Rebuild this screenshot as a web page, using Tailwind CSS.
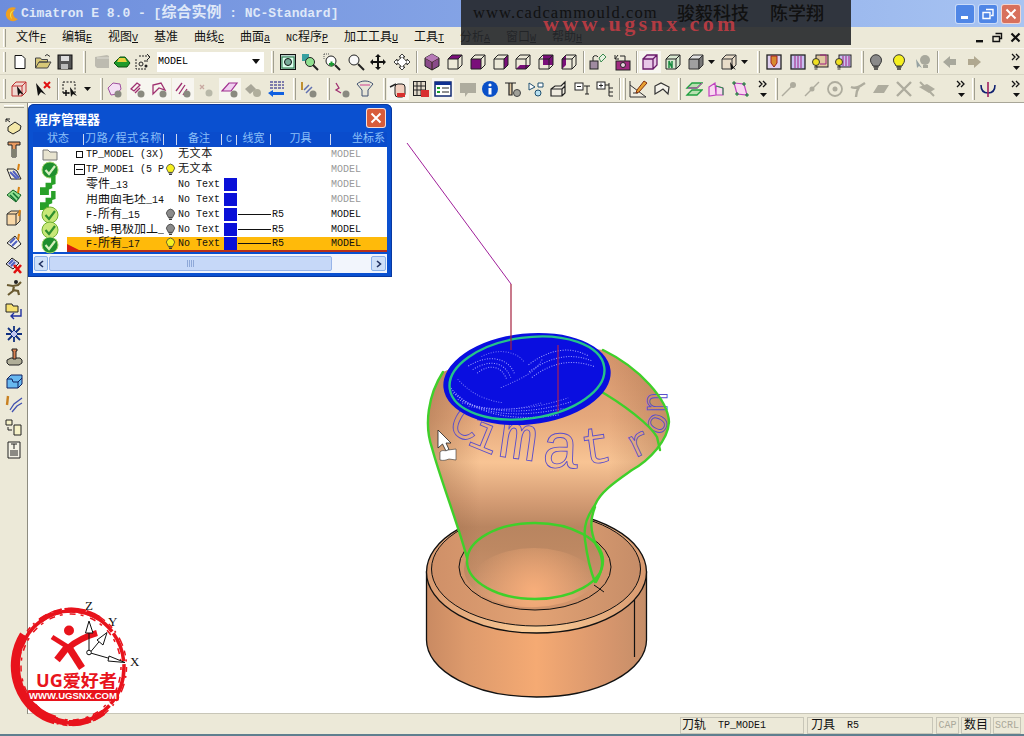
<!DOCTYPE html>
<html><head><meta charset="utf-8">
<script src="https://cdn.jsdelivr.net/npm/@tailwindcss/browser@4"></script>
</head>
<body class="m-0">
<svg width="0" height="0" class="absolute">
<defs>
<symbol id="grey" viewBox="0 0 18 18"><path d="M5 11a5.500 5.500 0 1 1 8 0l-1 2H6z" fill="#8a8a8a" stroke="#333"/><path d="M6.500 14h5M7 16h4" stroke="#333" stroke-width="1.400"/></symbol>
<symbol id="yel" viewBox="0 0 18 18"><path d="M5 11a5.500 5.500 0 1 1 8 0l-1 2H6z" fill="#f6f020" stroke="#333"/><path d="M6.500 14h5M7 16h4" stroke="#333" stroke-width="1.400"/></symbol>
<symbol id="chev" viewBox="0 0 14 22"><path d="M3 3l3 3-3 3M7 3l3 3-3 3" fill="none" stroke="#111" stroke-width="1.300"/><path d="M4 15h7l-3.500 4z" fill="#111"/></symbol>
<symbol id="face" viewBox="0 0 18 18"><path d="M2 6h10v10H2zM2 6l4-4h10v10l-4 4M12 6l4-4" fill="none" stroke="#222"/></symbol>
<symbol id="sel" viewBox="0 0 18 18"><path d="M2 8l5-5 7 1 1 5-4 5-6 1z" fill="#f4dff4" stroke="#a050a0"/><circle cx="12" cy="14" r="3.500" fill="#8a8a80"/></symbol>
<symbol id="ok" viewBox="0 0 18 18"><circle cx="9" cy="9" r="8" fill="#1f8f2f" stroke="#a8d870"/><path d="M4.500 9l3.500 4 6-8" fill="none" stroke="#d8f0c0" stroke-width="2.200"/></symbol>
<symbol id="okl" viewBox="0 0 18 18"><circle cx="9" cy="9" r="8" fill="#c8e878" stroke="#70b030"/><path d="M4.500 9l3.500 4 6-8" fill="none" stroke="#2f8f2f" stroke-width="2.200"/></symbol>
<symbol id="step" viewBox="0 0 18 18"><path d="M0 11h5V7h5V1h4v7l-3 1v3l-3 1v5H0z" fill="#28a028"/></symbol>
</defs>
</svg>
<div class="relative w-[1024px] h-[736px] overflow-hidden flex flex-col bg-[#ece9d8] text-black font-['Liberation_Mono','Noto_Sans_CJK_SC',monospace]">

<!-- title bar -->
<div class="h-[27px] shrink-0 flex items-center bg-gradient-to-r from-[#6d8ddc] via-[#86a5e6] to-[#a8c4f2]">
  <svg width="18" height="18" viewBox="0 0 18 18" class="ml-[3px]"><path d="M13 3a7 7 0 1 0 2 11 6 6 0 0 1-2-11z" fill="#f0a020"/><path d="M12 5a5 5 0 0 0-5 6 5 5 0 0 0 2 3 6 6 0 0 1 3-9z" fill="#f4e040"/></svg>
  <span class="ml-[0px] text-[13px] font-bold text-[#dfe8f8] whitespace-pre leading-none">Cimatron E 8.0 - [<span class="text-[15px]">综合实例</span> : NC-Standard]</span>
  <div class="ml-auto flex gap-[3px] mr-[3px]">
    <div class="w-[20px] h-[20px] rounded-[3px] bg-[#4f86e6] border border-white/70 flex items-end pl-[5px] pb-[4px]"><div class="w-[7px] h-[3px] bg-white"></div></div>
    <div class="w-[20px] h-[20px] rounded-[3px] bg-[#4f86e6] border border-white/70 flex items-center justify-center"><svg width="12" height="12" viewBox="0 0 12 12"><path d="M4 1.500h7v6H9M1 4.500h7v6H1z" fill="none" stroke="#fff" stroke-width="1.400"/></svg></div>
    <div class="w-[20px] h-[20px] rounded-[3px] bg-[#d8705c] border border-white/70 flex items-center justify-center"><svg width="12" height="12" viewBox="0 0 12 12"><path d="M1.500 1.500l9 9M10.500 1.500l-9 9" stroke="#fff" stroke-width="2"/></svg></div>
  </div>
</div>

<!-- menu -->
<div class="h-[22px] shrink-0 flex items-center text-[10px] text-[#111] border-b border-[#f8f6ee]">
  <div class="ml-[3px] w-[3px] h-[18px] border-l border-white border-r border-r-[#a09e90]"></div>
  <div class="ml-[10px] flex gap-[16px] items-center">
    <span class="w-[30px] whitespace-nowrap"><span class="text-[12px]">文件</span><u>F</u></span>
    <span class="w-[30px] whitespace-nowrap"><span class="text-[12px]">编辑</span><u>E</u></span>
    <span class="w-[30px] whitespace-nowrap"><span class="text-[12px]">视图</span><u>V</u></span>
    <span class="w-[24px] whitespace-nowrap"><span class="text-[12px]">基准</span></span>
    <span class="w-[30px] whitespace-nowrap"><span class="text-[12px]">曲线</span><u>C</u></span>
    <span class="w-[30px] whitespace-nowrap"><span class="text-[12px]">曲面</span><u>a</u></span>
    <span class="w-[42px] whitespace-nowrap">NC<span class="text-[12px]">程序</span><u>P</u></span>
    <span class="w-[54px] whitespace-nowrap"><span class="text-[12px]">加工工具</span><u>U</u></span>
    <span class="w-[30px] whitespace-nowrap"><span class="text-[12px]">工具</span><u>T</u></span>
    <span class="w-[30px] whitespace-nowrap"><span class="text-[12px]">分析</span><u>A</u></span>
    <span class="w-[30px] whitespace-nowrap"><span class="text-[12px]">窗口</span><u>W</u></span>
    <span class="w-[30px] whitespace-nowrap"><span class="text-[12px]">帮助</span><u>H</u></span>
  </div>
  <div class="ml-auto flex items-center gap-[7px] mr-[3px]">
    <svg width="10" height="10" viewBox="0 0 10 10"><rect x="1" y="7" width="7" height="2.400" fill="#111"/></svg>
    <svg width="11" height="11" viewBox="0 0 11 11"><path d="M3.500 1.500h6v5H8M1 4.500h6.500v5H1z" fill="none" stroke="#111" stroke-width="1.400"/></svg>
    <svg width="11" height="11" viewBox="0 0 11 11"><path d="M1.500 1.500l8 8M9.500 1.500l-8 8" stroke="#111" stroke-width="2.200"/></svg>
  </div>
</div>

<!-- toolbar 1 -->
<div class="h-[26px] shrink-0 flex items-center border-b border-[#d8d5c4]">
  <div class="ml-[3px] w-[3px] h-[20px] border-l border-white border-r border-r-[#a09e90]"></div>
  <div class="ml-[3px] w-[22px] h-[22px] flex items-center justify-center"><svg width="16" height="16" viewBox="0 0 16 16"><path d="M3 1.500h7l3 3v10H3z" fill="#fff" stroke="#111"/></svg></div>
  <div class="ml-[1px] w-[22px] h-[22px] flex items-center justify-center"><svg width="18" height="18" viewBox="0 0 18 18"><path d="M1.500 15V5h5l1 1.500h6V9H5L1.500 15h12l3.500-6H5" fill="#d8c878" stroke="#444"/><path d="M11 3l2-1.500 3 2" fill="none" stroke="#333"/></svg></div>
  <div class="w-[22px] h-[22px] flex items-center justify-center"><svg width="16" height="16" viewBox="0 0 16 16"><rect x="1" y="1" width="14" height="14" fill="#555" stroke="#111"/><rect x="4" y="2" width="8" height="5" fill="#ddd"/><rect x="4" y="10" width="7" height="5" fill="#bbb"/></svg></div>
  <div class="ml-[7px] w-[3px] h-[22px] border-l border-white border-r border-r-[#a09e90]"></div>
  <div class="ml-[6px] w-[20px] h-[22px] flex items-center justify-center"><svg width="18" height="18" viewBox="0 0 18 18"><path d="M2 4l12-2 2 1v12H4l-2-2z" fill="#bdbbb0"/><path d="M4 5h12" stroke="#e0dfd6"/></svg></div>
  <div class="w-[20px] h-[22px] flex items-center justify-center"><svg width="18" height="14" viewBox="0 0 18 14"><path d="M1 8l6-6h5l5 6-3 4H5z" fill="#1f9a2a" stroke="#0a5010"/><path d="M6 3h6l2 4H4z" fill="#e8d040"/></svg></div>
  <div class="ml-[1px] w-[20px] h-[22px] flex items-center justify-center"><svg width="18" height="18" viewBox="0 0 18 18"><path d="M2 6v10h10M5 3h10" fill="none" stroke="#222" stroke-dasharray="2 1"/><circle cx="7" cy="11" r="2" fill="none" stroke="#222"/><circle cx="12" cy="13" r="1.500" fill="#222"/><path d="M13 1l3 3-3 3M10 8l4 0" fill="none" stroke="#222"/></svg></div>
  <div class="ml-[4px] w-[107px] h-[20px] bg-white flex items-center text-[10px] pl-[1px] justify-between pr-[4px]"><span>MODEL</span><svg width="8" height="5" viewBox="0 0 8 5"><path d="M0 0h8L4 5z" fill="#111"/></svg></div>
  <div class="ml-[7px] w-[3px] h-[22px] border-l border-white border-r border-r-[#a09e90]"></div>
  <div class="ml-[3px] w-[22px] h-[22px] flex items-center justify-center"><svg width="18" height="18" viewBox="0 0 18 18"><rect x="1.500" y="1.500" width="15" height="15" fill="#bcd0cc" stroke="#111"/><rect x="3" y="4" width="12" height="11" fill="#dfe" stroke="#274"/><circle cx="9" cy="9" r="3.500" fill="#7a9" stroke="#111"/></svg></div>
  <div class="w-[22px] h-[22px] flex items-center justify-center"><svg width="18" height="18" viewBox="0 0 18 18"><rect x="1" y="1" width="7" height="7" fill="#38a0a0"/><circle cx="9" cy="9" r="4.500" fill="#90e090" stroke="#222"/><path d="M12 12l5 5" stroke="#222" stroke-width="2"/></svg></div>
  <div class="w-[22px] h-[22px] flex items-center justify-center"><svg width="18" height="18" viewBox="0 0 18 18"><circle cx="8" cy="8" r="5" fill="#fff" stroke="#222"/><path d="M12 12l5 5" stroke="#222" stroke-width="2"/><path d="M1 1h5M1 1v5" stroke="#555" stroke-dasharray="1 1"/><path d="M6 11h5M8.500 8.500v5" stroke="#1a9a30" stroke-width="2"/></svg></div>
  <div class="ml-[2px] w-[22px] h-[22px] flex items-center justify-center"><svg width="18" height="18" viewBox="0 0 18 18"><circle cx="7" cy="7" r="5" fill="#f8f8f8" stroke="#222"/><path d="M11 11l6 6" stroke="#222" stroke-width="2"/></svg></div>
  <div class="w-[22px] h-[22px] flex items-center justify-center"><svg width="18" height="18" viewBox="0 0 18 18"><path d="M9 1l3 3h-2v4h4V6l3 3-3 3v-2h-4v4h2l-3 3-3-3h2v-4H4v2L1 9l3-3v2h4V4H6z" fill="#111"/></svg></div>
  <div class="ml-[2px] w-[22px] h-[22px] flex items-center justify-center"><svg width="18" height="18" viewBox="0 0 18 18"><path d="M9 1l3 3h-2v1a6 6 0 0 1 3 3h1V6l3 3-3 3v-2h-1a6 6 0 0 1-3 3v1h2l-3 3-3-3h2v-1a6 6 0 0 1-3-3H4v2L1 9l3-3v2h1a6 6 0 0 1 3-3V4H6z" fill="#fff" stroke="#111" stroke-width=".8"/></svg></div>
  <div class="ml-[3px] w-[2px] h-[22px] border-l border-[#a09e90] border-r border-r-white"></div>
  <div class="ml-[3px] w-[22px] h-[22px] flex items-center justify-center"><svg width="18" height="18" viewBox="0 0 18 18"><path d="M9 1l7 4v8l-7 4-7-4V5z" fill="#8a4a8a" stroke="#222"/><path d="M2 5l7 4 7-4M9 9v8" stroke="#321"/><path d="M9 1l7 4-7 4-7-4z" fill="#b67ab6"/></svg></div>
  <div class="ml-[1px] w-[22px] h-[22px] flex items-center justify-center"><svg width="18" height="18"><polygon points="6,2 16,2 12,6 2,6" fill="#7a0f7a"/><use href="#face" width="18" height="18"/></svg></div>
  <div class="ml-[1px] w-[22px] h-[22px] flex items-center justify-center"><svg width="18" height="18"><rect x="2" y="6" width="10" height="10" fill="#7a0f7a"/><use href="#face" width="18" height="18"/></svg></div>
  <div class="ml-[1px] w-[22px] h-[22px] flex items-center justify-center"><svg width="18" height="18"><polygon points="12,6 16,2 16,12 12,16" fill="#7a0f7a"/><use href="#face" width="18" height="18"/></svg></div>
  <div class="w-[22px] h-[22px] flex items-center justify-center"><svg width="18" height="18"><polygon points="2,16 6,12 16,12 12,16" fill="#7a0f7a"/><use href="#face" width="18" height="18"/></svg></div>
  <div class="ml-[1px] w-[22px] h-[22px] flex items-center justify-center"><svg width="18" height="18"><rect x="6" y="2" width="10" height="10" fill="#7a0f7a"/><use href="#face" width="18" height="18"/></svg></div>
  <div class="ml-[1px] w-[22px] h-[22px] flex items-center justify-center"><svg width="18" height="18"><polygon points="2,6 6,2 6,12 2,16" fill="#7a0f7a"/><use href="#face" width="18" height="18"/></svg></div>
  <div class="ml-[3px] w-[2px] h-[22px] border-l border-[#a09e90] border-r border-r-white"></div>
  <div class="ml-[2px] w-[22px] h-[22px] flex items-center justify-center"><svg width="18" height="18" viewBox="0 0 18 18"><rect x="1" y="8" width="8" height="8" fill="#a08aa0" stroke="#222"/><path d="M4 8V4a3 3 0 0 1 5 0" fill="none" stroke="#222"/><path d="M10 5l4-4 3 3-5 5z" fill="#e8f0e0" stroke="#3a8a50"/></svg></div>
  <div class="ml-[2px] w-[22px] h-[22px] flex items-center justify-center"><svg width="18" height="18" viewBox="0 0 18 18"><rect x="3" y="8" width="14" height="9" fill="#a02a80" stroke="#222"/><circle cx="10" cy="12" r="2.500" fill="#e8d0e0" stroke="#222"/><path d="M2 6l3-4M2 2v4h4M7 3h5v5" fill="none" stroke="#222"/></svg></div>
  <div class="ml-[3px] w-[2px] h-[22px] border-l border-[#a09e90] border-r border-r-white"></div>
  <div class="ml-[1px] w-[22px] h-[22px] flex items-center justify-center bg-[#f7f6f0]"><svg width="18" height="18" viewBox="0 0 18 18"><path d="M2 6h10v10H2zM2 6l4-4h10v10l-4 4M12 6l4-4" fill="#e8c8e8" stroke="#6a1a6a" stroke-width="1.300"/></svg></div>
  <div class="ml-[1px] w-[22px] h-[22px] flex items-center justify-center"><svg width="18" height="18" viewBox="0 0 18 18"><path d="M2 6h10v10H2zM2 6l4-4h10v10l-4 4M12 6l4-4" fill="#d8e8d0" stroke="#222"/><path d="M5 15V8l3 7V8" fill="none" stroke="#1a8a40" stroke-width="1.500"/></svg></div>
  <div class="ml-[1px] w-[22px] h-[22px] flex items-center justify-center"><svg width="18" height="18" viewBox="0 0 18 18"><path d="M2 6h10v10H2z" fill="#a0a0a0" stroke="#333"/><path d="M2 6l4-4h10l-4 4z" fill="#e0e0e0" stroke="#333"/><path d="M12 6l4-4v10l-4 4z" fill="#787878" stroke="#333"/></svg></div>
  <div class="w-[8px] flex justify-center"><svg width="7" height="4" viewBox="0 0 7 4"><path d="M0 0h7L3.500 4z" fill="#111"/></svg></div>
  <div class="ml-[3px] w-[22px] h-[22px] flex items-center justify-center"><svg width="18" height="18" viewBox="0 0 18 18"><path d="M2 6h10v10H2zM2 6l4-4h10v10l-4 4M12 6l4-4" fill="#e8dcc8" stroke="#333"/><path d="M10 9l1 8 2-2 3 2z" fill="#111"/></svg></div>
  <div class="w-[8px] flex justify-center"><svg width="7" height="4" viewBox="0 0 7 4"><path d="M0 0h7L3.500 4z" fill="#111"/></svg></div>
  <div class="ml-[9px] w-[3px] h-[22px] border-l border-white border-r border-r-[#a09e90]"></div>
  <div class="ml-[3px] w-[22px] h-[22px] flex items-center justify-center"><svg width="18" height="18" viewBox="0 0 18 18"><rect x="2" y="2" width="14" height="14" fill="#e0d0f0" stroke="#222" stroke-width="1.300"/><path d="M6 3h6v7l-3 4-3-4z" fill="#d88a30" stroke="#a02020"/></svg></div>
  <div class="ml-[2px] w-[22px] h-[22px] flex items-center justify-center"><svg width="18" height="18" viewBox="0 0 18 18"><rect x="2" y="2" width="14" height="14" fill="#c8c0f0" stroke="#222" stroke-width="1.300"/><path d="M6 3v12M9 3v12M12 3v12" stroke="#a02080"/></svg></div>
  <div class="w-[22px] h-[22px] flex items-center justify-center"><svg width="18" height="18" viewBox="0 0 18 18"><rect x="5" y="2" width="12" height="12" fill="#e0c8a0" stroke="#222"/><path d="M9 2h6v9H9" fill="none" stroke="#a02080"/><circle cx="5" cy="9" r="3.500" fill="#f0e020" stroke="#333"/><path d="M3 14h4M3.500 16h3" stroke="#333"/></svg></div>
  <div class="ml-[1px] w-[22px] h-[22px] flex items-center justify-center"><svg width="18" height="18" viewBox="0 0 18 18"><rect x="5" y="2" width="12" height="12" fill="#c8c0f0" stroke="#222"/><path d="M9 3v10M12 3v10M15 3v10" stroke="#a02080"/><circle cx="5" cy="9" r="3.500" fill="#f0e020" stroke="#333"/><path d="M3 14h4M3.500 16h3" stroke="#333"/></svg></div>
  <div class="ml-[7px] w-[3px] h-[22px] border-l border-white border-r border-r-[#a09e90]"></div>
  <div class="ml-[1px] w-[22px] h-[22px] flex items-center justify-center"><svg width="18" height="18"><use href="#grey" width="18" height="18"/></svg></div>
  <div class="ml-[1px] w-[22px] h-[22px] flex items-center justify-center"><svg width="18" height="18"><use href="#yel" width="18" height="18"/></svg></div>
  <div class="ml-[2px] w-[22px] h-[22px] flex items-center justify-center"><svg width="18" height="18" viewBox="0 0 18 18"><circle cx="11" cy="7" r="5" fill="#a8a89c"/><path d="M9 12h5v3H9z" fill="#a8a89c"/><path d="M2 6l1 9 2-2 3 2z" fill="#96a2a2"/></svg></div>
  <div class="ml-[3px] w-[2px] h-[22px] border-l border-[#a09e90] border-r border-r-white"></div>
  <div class="w-[22px] h-[22px] flex items-center justify-center"><svg width="16" height="14" viewBox="0 0 16 14"><path d="M1 7l7-6v3h6v6H8v3z" fill="#a8a89c"/></svg></div>
  <div class="ml-[2px] w-[22px] h-[22px] flex items-center justify-center"><svg width="16" height="14" viewBox="0 0 16 14"><path d="M15 7L8 1v3H2v6h6v3z" fill="#b0a890"/></svg></div>
  <svg width="14" height="22" class="ml-auto mr-[1px]"><use href="#chev" width="14" height="22"/></svg>
</div>

<!-- toolbar 2 -->
<div class="h-[28px] shrink-0 flex items-center border-b border-[#a8a698]">
  <div class="ml-[3px] w-[3px] h-[20px] border-l border-white border-r border-r-[#a09e90]"></div>
  <div class="ml-[2px] w-[22px] h-[22px] flex items-center justify-center"><svg width="18" height="18" viewBox="0 0 18 18"><path d="M2 6h10v10H2zM2 6l4-4h10v10l-4 4M12 6l4-4" fill="#f0d8d0" stroke="#c03030"/><path d="M7 6l1 10 2-3 4 2z" fill="#111"/></svg></div>
  <div class="ml-[2px] w-[22px] h-[22px] flex items-center justify-center"><svg width="18" height="18" viewBox="0 0 18 18"><path d="M2 3l2 13 3-4 5 3z" fill="#111"/><path d="M10 2l6 6M16 2l-6 6" stroke="#e01010" stroke-width="2"/></svg></div>
  <div class="ml-[3px] w-[2px] h-[22px] border-l border-[#a09e90] border-r border-r-white"></div>
  <div class="w-[22px] h-[22px] flex items-center justify-center"><svg width="18" height="18" viewBox="0 0 18 18"><rect x="2" y="2" width="12" height="11" fill="none" stroke="#111" stroke-dasharray="2 1.500"/><path d="M9 7l1 10 2-3 4 2z" fill="#111"/><path d="M5 10v6M2 13h6" stroke="#111" stroke-width="1.500"/></svg></div>
  <div class="ml-[2px] w-[8px] flex justify-center"><svg width="7" height="4" viewBox="0 0 7 4"><path d="M0 0h7L3.500 4z" fill="#111"/></svg></div>
  <div class="ml-[9px] w-[3px] h-[22px] border-l border-white border-r border-r-[#a09e90]"></div>
  <div class="ml-[1px] w-[22px] h-[22px] flex items-center justify-center"><svg width="18" height="18"><use href="#sel" width="18" height="18"/></svg></div>
  <div class="ml-[1px] w-[22px] h-[22px] flex items-center justify-center bg-[#f7f6f0]"><svg width="18" height="18" viewBox="0 0 18 18"><path d="M2 9l6-6 3 2-6 6zM6 13l5-5" fill="none" stroke="#a03070" stroke-width="1.300"/><circle cx="12" cy="14" r="3.500" fill="#8a8a80"/></svg></div>
  <div class="w-[22px] h-[22px] flex items-center justify-center bg-[#f7f6f0]"><svg width="18" height="18" viewBox="0 0 18 18"><path d="M2 14V5l8-2 4 7-6-2z" fill="none" stroke="#a03070" stroke-width="1.300"/><circle cx="12" cy="14" r="3.500" fill="#8a8a80"/></svg></div>
  <div class="ml-[1px] w-[22px] h-[22px] flex items-center justify-center bg-[#f7f6f0]"><svg width="18" height="18" viewBox="0 0 18 18"><path d="M2 11l6-8M5 14l6-9M9 15l4-6" fill="none" stroke="#a03070" stroke-width="1.300"/><circle cx="13" cy="14" r="3.500" fill="#8a8a80"/></svg></div>
  <div class="ml-[1px] w-[22px] h-[22px] flex items-center justify-center"><svg width="18" height="18" viewBox="0 0 18 18"><path d="M3 5l4 4M7 5l-4 4" stroke="#c8a8a0" stroke-width="1.300"/><circle cx="12" cy="13" r="3.500" fill="#b8b8a8"/></svg></div>
  <div class="ml-[2px] w-[22px] h-[22px] flex items-center justify-center bg-[#f7f6f0]"><svg width="18" height="18" viewBox="0 0 18 18"><path d="M1 11l7-8h8l-6 8z" fill="#f0d0f0" stroke="#a03090" stroke-width="1.200"/><circle cx="13" cy="14" r="3.500" fill="#8a8a80"/></svg></div>
  <div class="ml-[1px] w-[22px] h-[22px] flex items-center justify-center"><svg width="18" height="18" viewBox="0 0 18 18"><path d="M1 9l6-5 5 5-6 5z" fill="#a8a698"/><circle cx="13" cy="13" r="4" fill="#b0ae9c"/></svg></div>
  <div class="ml-[1px] w-[22px] h-[22px] flex items-center justify-center"><svg width="18" height="18" viewBox="0 0 18 18"><path d="M3 2h14M3 5h14M3 8h14" stroke="#101080" stroke-width="1.200" stroke-dasharray="3 1"/><path d="M1 13l5-3v2h11v3H6v2z" fill="#1060e0"/></svg></div>
  <div class="ml-[6px] w-[3px] h-[22px] border-l border-white border-r border-r-[#a09e90]"></div>
  <div class="ml-[2px] w-[22px] h-[22px] flex items-center justify-center"><svg width="18" height="18" viewBox="0 0 18 18"><path d="M2 2v8" stroke="#c09030" stroke-width="2"/><path d="M4 10l5-5M6 13l6-6" stroke="#6070b0" stroke-width="1.500"/><circle cx="13" cy="14" r="3.500" fill="#8a8a80"/></svg></div>
  <div class="ml-[7px] w-[3px] h-[22px] border-l border-white border-r border-r-[#a09e90]"></div>
  <div class="ml-[1px] w-[22px] h-[22px] flex items-center justify-center"><svg width="18" height="18" viewBox="0 0 18 18"><path d="M3 3l3 5-3 2 5 3" fill="none" stroke="#a03070" stroke-width="1.300"/><circle cx="13" cy="14" r="3.500" fill="#8a8a80"/></svg></div>
  <div class="ml-[1px] w-[22px] h-[22px] flex items-center justify-center"><svg width="18" height="18" viewBox="0 0 18 18"><path d="M1 4c4-4 12-4 16 0l-5 6v6H6v-6z" fill="#e8e6d8" stroke="#405070"/><path d="M4 5h10" stroke="#d04090"/></svg></div>
  <div class="ml-[7px] w-[3px] h-[22px] border-l border-white border-r border-r-[#a09e90]"></div>
  <div class="ml-[1px] w-[22px] h-[22px] flex items-center justify-center bg-[#f7f6f0]"><svg width="18" height="18" viewBox="0 0 18 18"><path d="M1 7l6-3" stroke="#222" stroke-width="1.500"/><rect x="6" y="4" width="10" height="13" rx="3" fill="#f0d0c0" stroke="#222"/><path d="M8 13h8v4H8z" fill="#d83030"/></svg></div>
  <div class="ml-[1px] w-[22px] h-[22px] flex items-center justify-center"><svg width="18" height="18" viewBox="0 0 18 18"><rect x="1.500" y="1.500" width="12" height="14" fill="#e0d8c8" stroke="#222"/><path d="M5 1v14M9 1v14M1 6h12M1 10h12" stroke="#222"/><path d="M9 10h8v7H9z" fill="#d83030"/></svg></div>
  <div class="w-[22px] h-[22px] flex items-center justify-center bg-[#f7f6f0]"><svg width="18" height="18" viewBox="0 0 18 18"><rect x="1" y="2" width="16" height="14" fill="#fff" stroke="#102870" stroke-width="1.500"/><rect x="1" y="2" width="16" height="3" fill="#103090"/><rect x="3" y="7" width="3" height="2" fill="#18a028"/><rect x="3" y="11" width="3" height="2" fill="#18a028"/><path d="M8 8h7M8 12h7" stroke="#222"/></svg></div>
  <div class="ml-[3px] w-[22px] h-[22px] flex items-center justify-center"><svg width="18" height="18" viewBox="0 0 18 18"><path d="M1 3h16v10H9l-3 4v-4H1z" fill="#aeac9e"/></svg></div>
  <div class="w-[22px] h-[22px] flex items-center justify-center"><svg width="18" height="18" viewBox="0 0 18 18"><circle cx="9" cy="9" r="8" fill="#0a50c8"/><circle cx="9" cy="5" r="1.600" fill="#fff"/><rect x="7.500" y="8" width="3" height="6.500" fill="#fff"/></svg></div>
  <div class="ml-[1px] w-[22px] h-[22px] flex items-center justify-center"><svg width="18" height="18" viewBox="0 0 18 18"><path d="M1 3h11M5 3v12h3V3" fill="#e0c8a0" stroke="#222" stroke-width="1.200"/><circle cx="13" cy="13" r="3.500" fill="#a0a098" stroke="#444"/></svg></div>
  <div class="ml-[1px] w-[22px] h-[22px] flex items-center justify-center"><svg width="18" height="18" viewBox="0 0 18 18"><path d="M2 3l6 4-6 3z" fill="#fff" stroke="#205070"/><circle cx="11" cy="13" r="3" fill="#b8e0f0" stroke="#205070"/><path d="M11 3h5v4h-5z" fill="#fff" stroke="#205070"/></svg></div>
  <div class="w-[22px] h-[22px] flex items-center justify-center"><svg width="18" height="18" viewBox="0 0 18 18"><path d="M2 16V9l4-3h6l4-4v11l-3 3zM2 9h11v7M13 9l3-3" fill="#f0ece0" stroke="#222" stroke-width="1.200"/></svg></div>
  <div class="ml-[2px] w-[22px] h-[22px] flex items-center justify-center"><svg width="18" height="18" viewBox="0 0 18 18"><rect x="2" y="3" width="8" height="7" fill="#fff" stroke="#222"/><path d="M4 6.500h4M11 6h6M14 6v8M12 14h4" fill="none" stroke="#222"/></svg></div>
  <div class="ml-[1px] w-[22px] h-[22px] flex items-center justify-center"><svg width="18" height="18" viewBox="0 0 18 18"><rect x="1" y="2" width="8" height="7" fill="#fff" stroke="#222"/><path d="M3 5.500h4M5 3.500v4M9 5h4M13 3v13M13 8h4M13 12h4M13 16h4" fill="none" stroke="#222"/></svg></div>
  <div class="ml-[3px] w-[2px] h-[22px] border-l border-[#a09e90] border-r border-r-white"></div>
  <div class="ml-[2px] w-[3px] h-[22px] border-l border-white border-r border-r-[#a09e90]"></div>
  <div class="ml-[1px] w-[22px] h-[22px] flex items-center justify-center"><svg width="20" height="20" viewBox="0 0 20 20"><path d="M2 2v16h16L2 6M5 14h5" fill="#f0ece0" stroke="#333"/><path d="M16 2l3 2-8 9-3 1 1-3z" fill="#e8a030" stroke="#803010"/></svg></div>
  <div class="ml-[2px] w-[22px] h-[22px] flex items-center justify-center"><svg width="18" height="18" viewBox="0 0 18 18"><path d="M2 14V6l6-3 8 4-1 7-5-5-3 2z" fill="#f4f2ea" stroke="#333" stroke-width="1.200"/></svg></div>
  <div class="ml-[5px] w-[3px] h-[22px] border-l border-white border-r border-r-[#a09e90]"></div>
  <div class="ml-[2px] w-[22px] h-[22px] flex items-center justify-center"><svg width="18" height="18" viewBox="0 0 18 18"><path d="M2 8l5-5h10l-5 5zM2 15l5-5h10l-5 5z" fill="#b8e0b0" stroke="#20a040" stroke-width="1.300"/><path d="M3 8h9l5-5" stroke="#d030c0" fill="none"/></svg></div>
  <div class="w-[22px] h-[22px] flex items-center justify-center"><svg width="18" height="18" viewBox="0 0 18 18"><path d="M2 7l6-4 1 12-7 1zM9 6l7 2v7l-7 0z" fill="#f8d8f0" stroke="#c040c0" stroke-width="1.200"/><path d="M9 6l7 2v7" fill="none" stroke="#20a040"/></svg></div>
  <div class="ml-[2px] w-[22px] h-[22px] flex items-center justify-center"><svg width="18" height="18" viewBox="0 0 18 18"><path d="M3 3l10 1 3 11-10-1z" fill="#f8d8f0" stroke="#c040c0" stroke-width="1.200"/><path d="M1 3h4M3 1v4M11 4h4M13 2v4M4 14h4M6 12v4M14 15h4M16 13v4" stroke="#108030"/></svg></div>
  <svg width="14" height="22" class="ml-[5px]"><use href="#chev" width="14" height="22"/></svg>
  <div class="ml-[5px] w-[3px] h-[22px] border-l border-white border-r border-r-[#a09e90]"></div>
  <div class="w-[22px] h-[22px] flex items-center justify-center"><svg width="18" height="18" viewBox="0 0 18 18"><path d="M2 16L13 5" stroke="#aeac9e" stroke-width="1.500"/><circle cx="13" cy="5" r="3" fill="#aeac9e"/></svg></div>
  <div class="ml-[1px] w-[22px] h-[22px] flex items-center justify-center"><svg width="18" height="18" viewBox="0 0 18 18"><path d="M2 16L16 2" stroke="#aeac9e" stroke-width="1.500"/><circle cx="9" cy="9" r="2.500" fill="#aeac9e"/></svg></div>
  <div class="ml-[1px] w-[22px] h-[22px] flex items-center justify-center"><svg width="18" height="18" viewBox="0 0 18 18"><circle cx="9" cy="9" r="7" fill="none" stroke="#aeac9e" stroke-width="1.800"/><circle cx="9" cy="9" r="2.500" fill="#aeac9e"/></svg></div>
  <div class="ml-[1px] w-[22px] h-[22px] flex items-center justify-center"><svg width="18" height="18" viewBox="0 0 18 18"><path d="M2 7c5 2 8 0 14-4M7 17c0-4 1-7 3-10" fill="none" stroke="#aeac9e" stroke-width="2.400"/></svg></div>
  <div class="ml-[1px] w-[22px] h-[22px] flex items-center justify-center"><svg width="18" height="18" viewBox="0 0 18 18"><path d="M1 13l5-8h11l-5 8z" fill="#aeac9e"/></svg></div>
  <div class="ml-[1px] w-[22px] h-[22px] flex items-center justify-center"><svg width="18" height="18" viewBox="0 0 18 18"><path d="M2 2l14 14M16 2L2 16" stroke="#aeac9e" stroke-width="2.400"/></svg></div>
  <div class="ml-[1px] w-[22px] h-[22px] flex items-center justify-center"><svg width="18" height="18" viewBox="0 0 18 18"><path d="M1 7l8-3 8 5-6 4z" fill="#aeac9e"/><path d="M2 2l14 14" stroke="#aeac9e" stroke-width="2"/></svg></div>
  <svg width="14" height="22" class="ml-[16px]"><use href="#chev" width="14" height="22"/></svg>
  <div class="ml-[4px] w-[3px] h-[22px] border-l border-white border-r border-r-[#a09e90]"></div>
  <div class="ml-[2px] w-[22px] h-[22px] flex items-center justify-center"><svg width="18" height="18" viewBox="0 0 18 18"><path d="M2 5c0 6 3 8 7 8s7-2 7-8" fill="none" stroke="#102070" stroke-width="1.600"/><path d="M9 2v15" stroke="#a02060" stroke-width="1.600"/></svg></div>
  <svg width="14" height="22" class="ml-auto mr-[1px]"><use href="#chev" width="14" height="22"/></svg>
</div>

<!-- main area -->
<div class="flex-1 flex min-h-0 relative">
  <!-- left toolbar -->
  <div class="w-[28px] shrink-0 border-r border-[#8e8c80] flex flex-col items-center pt-[2px]">
    <div class="w-[20px] h-[3px] border-t border-white border-b border-b-[#a09e90] mb-[6px]"></div>
    <div class="h-[23.200px] flex items-center"><svg width="18" height="18" viewBox="0 0 18 18"><path d="M3 10l7-5 6 4-1 4-7 4-5-3z" fill="#f4e8a8" stroke="#222"/><path d="M1 2l4 3M5 2H1v3" fill="none" stroke="#222"/></svg></div>
    <div class="h-[23.200px] flex items-center"><svg width="18" height="18" viewBox="0 0 18 18"><path d="M3 2h12v3H11v12H7V5H3z" fill="#e89a60" stroke="#222"/><path d="M7 9h4v8H7z" fill="#808070"/></svg></div>
    <div class="h-[23.200px] flex items-center"><svg width="18" height="18" viewBox="0 0 18 18"><path d="M2 6h7l3 2 4 8H6z" fill="#f4f0d8" stroke="#222"/><path d="M5 9l7 7M8 8l6 7" stroke="#5060c0" stroke-width="2"/><path d="M14 1l-1 6" stroke="#d88010" stroke-width="2"/></svg></div>
    <div class="h-[23.200px] flex items-center"><svg width="18" height="18" viewBox="0 0 18 18"><path d="M2 9l6-5 8 5-5 7z" fill="#90e090" stroke="#106020"/><path d="M5 9l6 6M8 7l6 6" stroke="#107030" stroke-width="1.500"/><path d="M14 1l-1 6" stroke="#d88010" stroke-width="2"/></svg></div>
    <div class="h-[23.200px] flex items-center"><svg width="18" height="18" viewBox="0 0 18 18"><path d="M2 5h9v11H2zM2 5l4-3h9v10l-4 4M11 5l4-3" fill="#f8d8a8" stroke="#333"/><path d="M15 1l-1 6" stroke="#d88010" stroke-width="2"/></svg></div>
    <div class="h-[23.200px] flex items-center"><svg width="18" height="18" viewBox="0 0 18 18"><path d="M2 10l8-7 6 8-6 5z" fill="#f4f4f0" stroke="#222"/><path d="M5 10l5-5M7 13l5-5" stroke="#5060c0" stroke-width="2"/><path d="M14 1l-1 6" stroke="#d88010" stroke-width="2"/></svg></div>
    <div class="h-[23.200px] flex items-center"><svg width="18" height="18" viewBox="0 0 18 18"><path d="M1 8l6-6 7 5-6 6z" fill="#d8d8ee" stroke="#222"/><path d="M4 8l4-4M6 10l4-4" stroke="#5060c0" stroke-width="2"/><path d="M9 9l7 8M16 9l-7 8" stroke="#e01010" stroke-width="2.600"/></svg></div>
    <div class="h-[23.200px] flex items-center"><svg width="18" height="18" viewBox="0 0 18 18"><circle cx="11" cy="3" r="2" fill="#222"/><path d="M2 6l6 1 5-1 3-3M9 7l-1 5-5 4M8 11l5 1 1 4" fill="none" stroke="#6a5a30" stroke-width="2.200"/></svg></div>
    <div class="h-[23.200px] flex items-center"><svg width="18" height="18" viewBox="0 0 18 18"><path d="M1 2h6l1 2h5v6H1z" fill="#f6e070" stroke="#222"/><path d="M16 7v7H6M9 11l-3 3 3 3" fill="none" stroke="#2030a0" stroke-width="1.400"/></svg></div>
    <div class="h-[23.200px] flex items-center"><svg width="18" height="18" viewBox="0 0 18 18"><path d="M1 9h16M9 1v16M3 3l12 12M15 3L3 15" stroke="#103080" stroke-width="1.800"/><path d="M5 9l4-4 4 4-4 4z" fill="#c0c8f0" stroke="#103080"/></svg></div>
    <div class="h-[23.200px] flex items-center"><svg width="18" height="18" viewBox="0 0 18 18"><path d="M2 12l4-2h9l2 2v3l-3 2H4l-2-2z" fill="#b0ae98" stroke="#222"/><path d="M7 1h5v2h-1v8H8V3H7z" fill="#d88050" stroke="#222"/></svg></div>
    <div class="h-[23.200px] flex items-center"><svg width="18" height="18" viewBox="0 0 18 18"><path d="M2 7l4-4h11v9l-4 4H2z" fill="#68b8f0" stroke="#102060"/><path d="M2 7h5l1 3h5l4-4M13 10v6" fill="none" stroke="#102060"/></svg></div>
    <div class="h-[23.200px] flex items-center"><svg width="18" height="18" viewBox="0 0 18 18"><path d="M3 1l-1 9" stroke="#c88020" stroke-width="2.400"/><path d="M5 15l4-6 8-6M7 17l5-6 5-3" fill="none" stroke="#4050b0" stroke-width="1.300"/></svg></div>
    <div class="h-[23.200px] flex items-center"><svg width="18" height="18" viewBox="0 0 18 18"><path d="M1 2h6v5H1zM9 7h7v10H9z" fill="#f6f2c8" stroke="#222"/><path d="M7 12H3V9" fill="none" stroke="#222"/></svg></div>
    <div class="h-[23.200px] flex items-center"><svg width="18" height="18" viewBox="0 0 18 18"><path d="M3 1h12v16H3z" fill="#f4f2e6" stroke="#222"/><path d="M6 3h6M9 3v5M5 10h8M5 12h8M5 14h8" stroke="#222"/></svg></div>
  </div>

  <!-- drawing area -->
  <div class="flex-1 relative bg-white border-b border-[#c8c6b8]">
    <svg class="absolute left-0 top-0" width="996" height="610" viewBox="28 103 996 610">
      <defs>
        <linearGradient id="bodyV" gradientUnits="userSpaceOnUse" x1="0" y1="340" x2="0" y2="600">
          <stop offset="0" stop-color="#d09068"/><stop offset=".3" stop-color="#e5a87c"/><stop offset=".47" stop-color="#f8c494"/><stop offset=".62" stop-color="#d49c74"/><stop offset=".72" stop-color="#b98560"/><stop offset=".8" stop-color="#bd8862"/><stop offset="1" stop-color="#cf9670"/>
        </linearGradient>
        <linearGradient id="edge" gradientUnits="userSpaceOnUse" x1="426" y1="0" x2="669" y2="0">
          <stop offset="0" stop-color="#8a5a3a" stop-opacity=".4"/><stop offset=".22" stop-color="#8a5a3a" stop-opacity="0"/><stop offset=".75" stop-color="#8a5a3a" stop-opacity="0"/><stop offset="1" stop-color="#8a5a3a" stop-opacity=".35"/>
        </linearGradient>
        <radialGradient id="neckb" gradientUnits="userSpaceOnUse" cx="534" cy="592" r="62"><stop offset="0" stop-color="#f8ae7a"/><stop offset="1" stop-color="#f8ae7a" stop-opacity="0"/></radialGradient>
        <linearGradient id="side" x1="0" y1="0" x2="1" y2="0"><stop offset="0" stop-color="#c98a62"/><stop offset=".18" stop-color="#dd9a6c"/><stop offset=".5" stop-color="#f5aa73"/><stop offset=".82" stop-color="#d7966d"/><stop offset="1" stop-color="#c48d68"/></linearGradient>
        <linearGradient id="top" x1="0" y1="0" x2="1" y2="0"><stop offset="0" stop-color="#cf9068"/><stop offset=".5" stop-color="#e2a274"/><stop offset="1" stop-color="#c68d68"/></linearGradient>
        <linearGradient id="band" x1="0" y1="0" x2="1" y2="0"><stop offset="0" stop-color="#d99a70"/><stop offset=".5" stop-color="#fdd09c"/><stop offset="1" stop-color="#d8996f"/></linearGradient>
        <clipPath id="bodyclip"><path d="M443 372C428 395 424 425 432 448C440 478 460 530 467 558A68 38 0 0 0 596 582C606 565 602 555 596 545C590 530 590 520 595 507C598 497 612 484 632 470C650 460 668 440 669 422C668 400 640 368 603 350L520 340z"/></clipPath>
      </defs>
      <path d="M407 143L511 284" stroke="#a0209a" fill="none"/>

      <!-- base -->
      <path d="M426.500 572V640A110 57 0 0 0 646.500 640V572z" fill="url(#side)" stroke="#111" stroke-width="1.300"/>
      <ellipse cx="536.500" cy="572" rx="110" ry="61" fill="url(#band)" stroke="#111" stroke-width="1.300"/>
      <ellipse cx="536" cy="569" rx="104.500" ry="57" fill="url(#top)" stroke="#111" stroke-width="1"/>
      <ellipse cx="535" cy="567" rx="76" ry="43" fill="#d2946b" stroke="#111"/>
      <path d="M634.500 600V657" stroke="#111" stroke-width="1.200"/>
      <path d="M594 585l10 7" stroke="#111"/>

      <!-- body -->
      <g clip-path="url(#bodyclip)">
        <rect x="420" y="335" width="255" height="270" fill="url(#bodyV)"/>
        <rect x="420" y="335" width="255" height="270" fill="url(#edge)"/>
        <ellipse cx="534" cy="590" rx="68" ry="42" fill="url(#neckb)"/>
      </g>

      <!-- engraved text, one letter at a time following the surface -->
      <g font-family="'Liberation Mono',monospace" fill="none" stroke="#5a4ecb" stroke-width=".9">
        <text font-size="50" transform="translate(446 430) rotate(28)">C</text>
        <text font-size="50" transform="translate(466 444) rotate(22)">i</text>
        <text font-size="64" transform="translate(497 456) rotate(8)">m</text>
        <text font-size="64" transform="translate(541 467) rotate(2)">a</text>
        <text font-size="52" transform="translate(583 465) rotate(-8)">t</text>
        <text font-size="40" transform="translate(633 459) rotate(-25)">r</text>
        <text font-size="34" transform="translate(660 437) rotate(-60)">o</text>
        <text font-size="36" transform="translate(667 413) rotate(-90)">n</text>
      </g>

      <!-- green outlines -->
      <g fill="none" stroke="#3fd02a" stroke-width="2.400" stroke-linecap="round">
        <path d="M443 372C428 395 424 425 432 448C440 478 460 530 467 558"/>
        <path d="M603 350C640 368 668 400 669 422C668 440 650 460 632 470C615 482 600 492 595 505C588 515 583 525 585 540C587 555 590 570 595 582"/>
        <path d="M595 507C590 520 590 530 596 545C602 555 606 565 596 582"/>
        <path d="M595 388C625 405 650 425 657 437L660 450"/>
        <ellipse cx="535" cy="561" rx="68" ry="38"/>
      </g>

      <!-- machined top -->
      <ellipse cx="527" cy="379" rx="84" ry="45.500" transform="rotate(-6 527 379)" fill="#0a0ee0"/>
      <g fill="none" stroke="#a0a4ff" stroke-width="1" stroke-dasharray="1 1.500" transform="rotate(-6 527 379)">
        <path d="M449 378C470 412 515 420 555 418"/>
        <path d="M452 385C480 414 520 416 560 412"/>
        <path d="M456 392C490 412 530 414 570 406"/>
        <path d="M460 396C494 410 530 410 566 402" stroke-opacity=".8"/>
        <path d="M466 400C500 410 520 408 540 404" stroke-opacity=".7"/>
        <path d="M458 372C468 385 478 394 500 400" stroke-opacity=".7"/>
        <path d="M470 360C490 350 510 355 515 372"/>
        <path d="M474 364C490 356 506 358 511 376"/>
        <path d="M478 368C490 360 503 362 507 378"/>
        <path d="M484 352C500 345 520 350 526 362" stroke-opacity=".7"/>
        <path d="M530 365C555 350 575 352 590 362"/>
        <path d="M530 372C555 358 575 358 594 368"/>
        <path d="M532 378C555 364 575 364 596 374"/>
        <path d="M500 385C520 378 535 375 545 360" stroke-opacity=".8"/>
      </g>
      <ellipse cx="527" cy="378" rx="78" ry="40.500" transform="rotate(-8 527 378)" fill="none" stroke="#25c38a" stroke-width="2.400"/>
      <path d="M511 284V350" stroke="#a5203f" stroke-width="1.200" fill="none"/>
      <path d="M558 345V412" stroke="#a82058" stroke-width="1.200" fill="none"/>

      <!-- cursor -->
      <path d="M438 430V448L442.500 444 446 451 449 449.500 446 443H451z" fill="#fff" stroke="#222" stroke-width=".8"/>
      <path d="M440 452c3-3 5 0 8-2l8-1v11l-7-1c-3 1-5 2-9 1z" fill="#fff" stroke="#333" stroke-width=".6"/>
    </svg>
  </div>

  <!-- program manager window -->
  <div class="absolute left-[28px] top-[1px] w-[364px] h-[173px] rounded-t-[6px] bg-[#0a50d0] flex flex-col px-[5px] pb-[4px] shadow-[inset_0_0_0_1px_#0838a0]">
    <div class="h-[28px] shrink-0 flex items-center justify-between text-white pl-[2px] pr-[1px]">
      <span class="text-[13px] font-bold font-['Noto_Sans_CJK_SC',sans-serif] leading-none">程序管理器</span>
      <div class="w-[20px] h-[20px] rounded-[3px] bg-[#d85c3a] border border-white/80 flex items-center justify-center"><svg width="12" height="12" viewBox="0 0 12 12"><path d="M1.500 1.500l9 9M10.500 1.500l-9 9" stroke="#fff" stroke-width="2"/></svg></div>
    </div>
    <div class="h-[15px] shrink-0 flex items-center text-center text-[11px] text-[#8cc0f8] bg-[#0a4ccc] leading-none">
      <span class="w-[51px] border-r border-[#d0d8f0]">状态</span>
      <span class="w-[80px] border-r border-[#d0d8f0] whitespace-nowrap tracking-[.6px]">刀路/程式名称</span>
      <span class="w-[13px] border-r border-[#d0d8f0]">&nbsp;</span>
      <span class="w-[45px] border-r border-[#d0d8f0]">备注</span>
      <span class="w-[15px] border-r border-[#d0d8f0] text-[10px]">C</span>
      <span class="w-[34px] border-r border-[#d0d8f0]">线宽</span>
      <span class="w-[60px] border-r border-[#d0d8f0]">刀具</span>
      <span class="flex-1 text-right pr-[2px]">坐标系</span>
    </div>
    <div class="h-[105px] shrink-0 bg-white flex flex-col text-[10px] text-[#111] leading-none whitespace-pre">
      <div class="h-[15px] flex items-center">
        <div class="w-[34px] flex justify-center"><svg width="16" height="13" viewBox="0 0 16 13"><path d="M1 12V2h5l2 2h7v8z" fill="#e8e4d0" stroke="#777"/></svg></div>
        <div class="w-[18px] flex justify-center"><div class="w-[7px] h-[7px] border border-[#111] ml-[6px]"></div></div>
        <span class="w-[79px] pl-[1px]">TP_MODEL (3X)</span><span class="w-[13px]"></span><span class="w-[45px] pl-[1px] text-[11px] tracking-[.6px]">无文本</span><span class="w-[15px]"></span><span class="w-[34px]"></span><span class="w-[60px]"></span><span class="text-[#999]">MODEL</span>
      </div>
      <div class="h-[15px] flex items-center">
        <div class="w-[34px] flex justify-center"><svg width="18" height="18"><use href="#ok" width="18" height="18"/></svg></div>
        <div class="w-[18px] flex justify-center"><div class="w-[11px] h-[11px] border border-[#111] ml-[6px] flex items-center justify-center"><div class="w-[7px] h-px bg-[#111]"></div></div></div>
        <span class="w-[79px] pl-[1px]">TP_MODE1 (5 P</span><svg width="13" height="13" class="w-[13px] shrink-0"><use href="#yel" width="13" height="13"/></svg><span class="w-[45px] pl-[1px] text-[11px] tracking-[.6px]">无文本</span><span class="w-[15px]"></span><span class="w-[34px]"></span><span class="w-[60px]"></span><span class="text-[#999]">MODEL</span>
      </div>
      <div class="h-[15px] flex items-center">
        <div class="w-[34px] flex justify-center"><svg width="20" height="20"><use href="#step" width="20" height="20"/></svg></div>
        <span class="w-[18px]"></span><span class="w-[79px] pl-[1px]"><span class="text-[12px]">零件</span>_13</span><span class="w-[13px]"></span><span class="w-[45px] pl-[1px]">No Text</span><div class="w-[15px] pl-[2px]"><div class="w-[13px] h-[13px] bg-[#0a10d8]"></div></div><span class="w-[34px]"></span><span class="w-[60px]"></span><span class="text-[#999]">MODEL</span>
      </div>
      <div class="h-[15px] flex items-center">
        <div class="w-[34px] flex justify-center"><svg width="20" height="20"><use href="#step" width="20" height="20"/></svg></div>
        <span class="w-[18px]"></span><span class="w-[79px] pl-[1px] overflow-hidden"><span class="text-[12px]">用曲面毛坯</span>_14</span><span class="w-[13px]"></span><span class="w-[45px] pl-[1px]">No Text</span><div class="w-[15px] pl-[2px]"><div class="w-[13px] h-[13px] bg-[#0a10d8]"></div></div><span class="w-[34px]"></span><span class="w-[60px]"></span><span class="text-[#999]">MODEL</span>
      </div>
      <div class="h-[15px] flex items-center">
        <div class="w-[34px] flex justify-center"><svg width="18" height="18"><use href="#okl" width="18" height="18"/></svg></div>
        <span class="w-[18px]"></span><span class="w-[79px] pl-[1px]">F-<span class="text-[12px]">所有</span>_15</span><svg width="13" height="13" class="shrink-0"><use href="#grey" width="13" height="13"/></svg><span class="w-[45px] pl-[1px]">No Text</span><div class="w-[15px] pl-[2px]"><div class="w-[13px] h-[13px] bg-[#0a10d8]"></div></div><div class="w-[34px] pl-[1px]"><div class="h-px bg-[#111]"></div></div><span class="w-[60px] pl-[1px]">R5</span><span>MODEL</span>
      </div>
      <div class="h-[15px] flex items-center">
        <div class="w-[34px] flex justify-center"><svg width="18" height="18"><use href="#okl" width="18" height="18"/></svg></div>
        <span class="w-[18px]"></span><span class="w-[79px] pl-[1px] overflow-hidden">5<span class="text-[12px]">轴</span>-<span class="text-[12px]">电极加工</span>_</span><svg width="13" height="13" class="shrink-0"><use href="#grey" width="13" height="13"/></svg><span class="w-[45px] pl-[1px]">No Text</span><div class="w-[15px] pl-[2px]"><div class="w-[13px] h-[13px] bg-[#0a10d8]"></div></div><div class="w-[34px] pl-[1px]"><div class="h-px bg-[#111]"></div></div><span class="w-[60px] pl-[1px]">R5</span><span>MODEL</span>
      </div>
      <div class="h-[15px] flex items-center">
        <div class="w-[34px] flex justify-center"><svg width="18" height="18"><use href="#ok" width="18" height="18"/></svg></div>
        <div class="relative flex-1 h-full flex items-center bg-[#ffba0a] border-b-2 border-[#b8301a]">
          <svg width="12" height="6" viewBox="0 0 12 6" class="absolute left-0 bottom-0"><path d="M0 0L12 6H0z" fill="#d81a10"/></svg>
          <span class="w-[18px]"></span><span class="w-[79px] pl-[1px]">F-<span class="text-[12px]">所有</span>_17</span><svg width="13" height="13" class="shrink-0"><use href="#yel" width="13" height="13"/></svg><span class="w-[45px] pl-[1px]">No Text</span><div class="w-[15px] pl-[2px]"><div class="w-[13px] h-[13px] bg-[#0a10d8]"></div></div><div class="w-[34px] pl-[1px]"><div class="h-px bg-[#111]"></div></div><span class="w-[60px] pl-[1px]">R5</span><span>MODEL</span>
        </div>
      </div>
    </div>
    <div class="h-[19px] shrink-0 bg-[#f2f5fc] flex items-center px-[1px] gap-[1px] mt-[2px]">
      <div class="w-[14px] h-[15px] bg-[#cfe0f8] border border-[#8ab0e8] rounded-[2px] flex items-center justify-center"><svg width="6" height="8" viewBox="0 0 6 8"><path d="M5 1L1.500 4 5 7" fill="none" stroke="#203060" stroke-width="1.600"/></svg></div>
      <div class="w-[283px] h-[15px] bg-[#c6d8f8] border border-[#98b4e8] rounded-[2px] flex items-center justify-center"><div class="w-[8px] h-[7px] bg-[repeating-linear-gradient(90deg,#8ea8d8_0_1px,transparent_1px_2px)]"></div></div>
      <div class="flex-1"></div>
      <div class="w-[15px] h-[15px] bg-[#cfe0f8] border border-[#8ab0e8] rounded-[2px] flex items-center justify-center"><svg width="6" height="8" viewBox="0 0 6 8"><path d="M1 1L4.500 4 1 7" fill="none" stroke="#203060" stroke-width="1.600"/></svg></div>
    </div>
  </div>
</div>

<!-- status bar -->
<div class="h-[20px] shrink-0 flex items-end text-[10px] text-[#111] leading-none">
  <div class="ml-[680px] w-[124px] h-[17px] border border-[#c8c6b8] flex items-center pl-[1px] whitespace-pre"><span class="text-[12px]">刀轨</span>  TP_MODE1</div>
  <div class="ml-[3px] w-[126px] h-[17px] border border-[#c8c6b8] flex items-center pl-[3px] whitespace-pre"><span class="text-[12px]">刀具</span>  R5</div>
  <div class="ml-[3px] w-[23px] h-[17px] border border-[#c8c6b8] flex items-center justify-center text-[#aaa89a]">CAP</div>
  <div class="ml-[2px] w-[30px] h-[17px] border border-[#c8c6b8] flex items-center justify-center text-[12px]">数目</div>
  <div class="ml-[2px] w-[28px] h-[17px] border border-[#c8c6b8] flex items-center justify-center text-[#aaa89a]">SCRL</div>
</div>
<div class="h-[2px] shrink-0 bg-[#5f7f8f]"></div>

<!-- watermark -->
<div class="absolute left-[461px] top-0 w-[390px] h-[45px] bg-[#25272a]/90 overflow-hidden">
  <span class="absolute left-[12px] top-[4px] text-[16.500px] tracking-[1.100px] leading-[18px] text-[#111] font-['Liberation_Serif',serif] whitespace-nowrap">www.cadcammould.com</span>
  <span class="absolute left-[216px] top-[1px] text-[18px] leading-[22px] font-medium text-[#111] font-['Noto_Sans_CJK_SC',serif] whitespace-nowrap">骏毅科技</span>
  <span class="absolute left-[309px] top-[1px] text-[18px] leading-[22px] font-medium text-[#111] font-['Noto_Sans_CJK_SC',serif] whitespace-nowrap">陈学翔</span>
  <span class="absolute left-[82px] top-[11px] text-[22px] leading-[26px] font-bold text-[#b23b42] tracking-[3.400px] font-['Liberation_Serif',serif] whitespace-nowrap">www.ugsnx.com</span>
</div>

<!-- logo -->
<svg class="absolute left-[10px] top-[603px]" width="122" height="128" viewBox="10 603 122 128">
  <g fill="none" stroke="#e8131c">
    <ellipse cx="71" cy="667" rx="53" ry="56" stroke-width="3.500" stroke-dasharray="40 2 30 3 60 2 50 4 70 3"/>
    <path d="M24 635A53 56 0 0 0 55 720" stroke-width="9"/>
    <path d="M40 621A53 56 0 0 1 100 619" stroke-width="5" stroke-dasharray="14 2 8 3 20 2"/>
    <path d="M55 720A53 56 0 0 0 105 711" stroke-width="6" stroke-dasharray="12 2 22 3"/>
    <ellipse cx="71" cy="667" rx="55.500" ry="58.500" stroke-width="1.500" stroke-dasharray="5 4 2 6 9 5"/>
    <ellipse cx="71" cy="667" rx="50" ry="53" stroke-width="1.500" stroke-dasharray="3 7 6 5"/>
  </g>
  <circle cx="69" cy="630.500" r="5" fill="#e8131c"/>
  <g fill="none" stroke="#e8131c" stroke-linecap="butt">
    <path d="M52 637L68 647" stroke-width="5"/>
    <path d="M68 648Q80 638 97 633" stroke-width="6"/>
    <path d="M68 646L57 660" stroke-width="7"/>
    <path d="M68 646L82 668" stroke-width="7"/>
  </g>
  <text x="36" y="687" font-family="'Noto Sans','Noto Sans CJK SC',sans-serif" font-size="17" font-weight="700" fill="#e8131c" textLength="81" lengthAdjust="spacingAndGlyphs">UG爱好者</text>
  <rect x="27" y="690" width="92" height="11" rx="2" fill="#e8131c"/>
  <text x="29" y="699" font-family="'Liberation Sans',sans-serif" font-size="9" font-weight="700" fill="#fff" textLength="88" lengthAdjust="spacingAndGlyphs">WWW.UGSNX.COM</text>
</svg>

<!-- axes -->
<svg class="absolute left-[70px] top-[595px]" width="80" height="80" viewBox="70 595 80 80">
  <g fill="none" stroke="#111" stroke-width="1">
    <path d="M89 652V633M90.500 652L103 637M90.500 653L115 660"/>
    <circle cx="89" cy="652.500" r="2.300" fill="#fff"/>
    <path d="M89 621L85.500 633H93z" fill="#fff"/>
    <path d="M107 632.500L97 640L103 645z" fill="#fff"/>
    <path d="M125 662.500L109 656L108 661z" fill="#fff"/>
  </g>
  <g font-family="'Liberation Serif',serif" font-size="13" fill="#111">
    <text x="85" y="610">Z</text><text x="108" y="626">Y</text><text x="130" y="666">X</text>
  </g>
</svg>
</div>
</body></html>
